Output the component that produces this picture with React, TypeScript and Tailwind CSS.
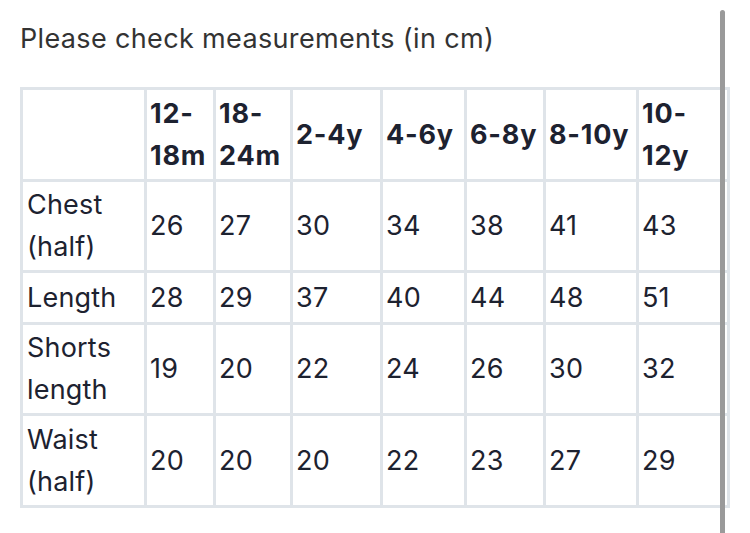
import React from "react";

const headers = [["12-", "18m"], ["18-", "24m"], ["2-4y"], ["4-6y"], ["6-8y"], ["8-10y"], ["10-", "12y"]];
const rows: { label: string[]; values: string[] }[] = [
  { label: ["Chest", "(half)"], values: ["26", "27", "30", "34", "38", "41", "43"] },
  { label: ["Length"], values: ["28", "29", "37", "40", "44", "48", "51"] },
  { label: ["Shorts", "length"], values: ["19", "20", "22", "24", "26", "30", "32"] },
  { label: ["Waist", "(half)"], values: ["20", "20", "20", "22", "23", "27", "29"] },
];

export default function App() {
  return (
    <div className="relative w-[750px] h-[533px] bg-white overflow-hidden" style={{ fontFamily: "Inter, 'Noto Sans', sans-serif" }}>
      <div className="pl-[20px] pt-[22px] text-[27px] leading-[34px] tracking-[0.35px] text-[#333]">Please check measurements (in cm)</div>
      <div
        className="ml-[20px] mt-[31px] w-[710px] grid gap-[3px] p-[3px] bg-[#dfe4e9] text-[#1d2230] text-[27px] leading-[42px] tracking-[0.2px]"
        style={{ gridTemplateColumns: "121px 66px 74px 87px 81px 76px 90px 88px", gridTemplateRows: "89px 88px 49px 88px 89px" }}
      >
        <div className="bg-white" />
        {headers.map((h, i) => (
          <div key={i} className="bg-white flex flex-col justify-center pl-[3px] font-bold tracking-[0.8px] whitespace-nowrap">
            {h.map((t, j) => (
              <div key={j}>{t}</div>
            ))}
          </div>
        ))}
        {rows.map((r, ri) => (
          <React.Fragment key={ri}>
            <div className="bg-white flex flex-col justify-center pl-[4px]">
              {r.label.map((t, j) => (
                <div key={j}>{t}</div>
              ))}
            </div>
            {r.values.map((v, vi) => (
              <div key={vi} className="bg-white flex items-center pl-[3px]">
                {v}
              </div>
            ))}
          </React.Fragment>
        ))}
      </div>
      <div className="absolute left-[720px] top-[10px] w-[5px] h-[540px] rounded-full bg-[#9a9a9a]" />
    </div>
  );
}
